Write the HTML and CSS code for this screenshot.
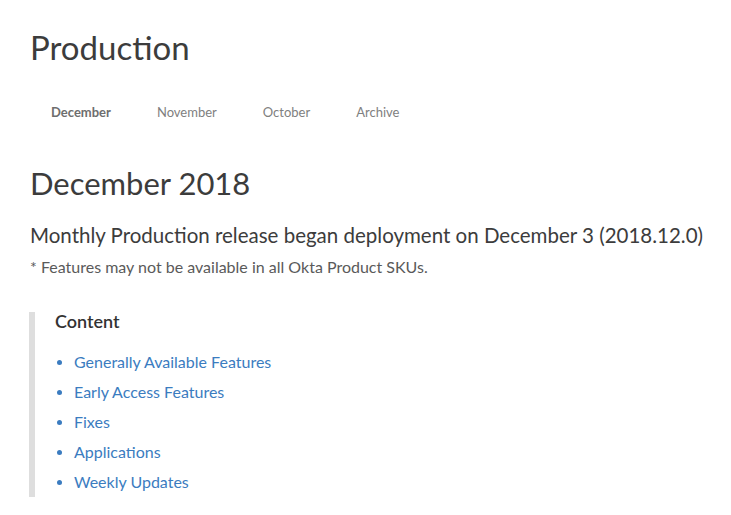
FILE: index.html
```html
<!DOCTYPE html>
<html>
<head>
<meta charset="utf-8">
<link rel="stylesheet" href="styles.css">
</head>
<body>
<main class="page">
  <h1 class="title">Production</h1>
  <nav class="tabs">
    <a class="tab active">December</a>
    <a class="tab">November</a>
    <a class="tab">October</a>
    <a class="tab">Archive</a>
  </nav>
  <h2 class="month">December 2018</h2>
  <p class="lead">Monthly Production release began deployment on December 3 (2018.12.0)</p>
  <p class="note">* Features may not be available in all Okta Product SKUs.</p>
  <section class="toc">
    <h3 class="toc-title">Content</h3>
    <ul class="toc-list">
      <li><a>Generally Available Features</a></li>
      <li><a>Early Access Features</a></li>
      <li><a>Fixes</a></li>
      <li><a>Applications</a></li>
      <li><a>Weekly Updates</a></li>
    </ul>
  </section>
</main>
</body>
</html>
```
FILE: styles.css
```css
html, body { margin: 0; padding: 0; background: #fff; }
body { font-family: Lato, "Open Sans", sans-serif; color: #333; }
.page { padding: 27px 0 0 30px; }
.title { margin: 0; font-size: 33px; font-weight: 400; line-height: 40px; color: #3c3c3c; }
.tabs { display: flex; gap: 46px; margin-top: 33px; padding-left: 21px; height: 24px; align-items: center; }
.tab { font-size: 13px; line-height: 24px; color: #808080; }
.tab.active { font-weight: 700; color: #6e6e6e; }
.month { margin: 39px 0 0; font-size: 31px; font-weight: 400; line-height: 40px; color: #3c3c3c; }
.lead { margin: 18px 0 0; font-size: 20.5px; line-height: 28px; color: #3c3c3c; }
.note { margin: 7px 0 0; font-size: 16px; line-height: 22px; color: #5a5a5a; }
.toc { margin: 34px 0 0 -1px; border-left: 6px solid #dedede; padding: 0 0 0 20px; }
.toc-title { margin: 0; font-size: 18px; font-weight: 600; line-height: 18px; color: #333; }
.toc-list { margin: 17px 0 0; padding: 0 0 0 19px; list-style: none; }
.toc-list li { position: relative; font-size: 16px; line-height: 30px; color: #3b7cc0; }
.toc-list li::before { content: ""; position: absolute; left: -17px; top: 13px; width: 5px; height: 5px; border-radius: 50%; background: #3b7cc0; }
.toc-list a { color: #3b7cc0; }
```
